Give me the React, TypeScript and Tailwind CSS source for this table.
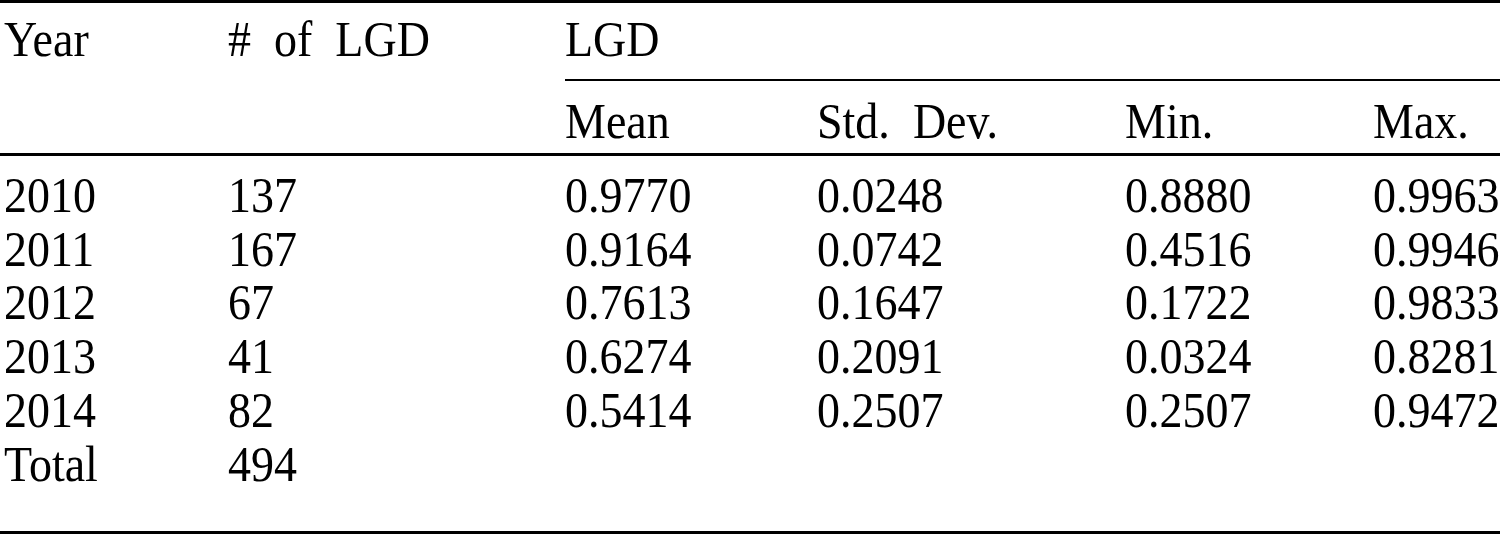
const rows = [
  { year: "2010", n: "137", mean: "0.9770", sd: "0.0248", min: "0.8880", max: "0.9963" },
  { year: "2011", n: "167", mean: "0.9164", sd: "0.0742", min: "0.4516", max: "0.9946" },
  { year: "2012", n: "67", mean: "0.7613", sd: "0.1647", min: "0.1722", max: "0.9833" },
  { year: "2013", n: "41", mean: "0.6274", sd: "0.2091", min: "0.0324", max: "0.8281" },
  { year: "2014", n: "82", mean: "0.5414", sd: "0.2507", min: "0.2507", max: "0.9472" },
]

const cols = "grid grid-cols-[224px_337px_252px_308px_248px_1fr] pl-[4px]"

function Txt({ children }: { children: React.ReactNode }) {
  return <div className="scale-y-110 whitespace-nowrap leading-[54px]">{children}</div>
}

export default function App() {
  return (
    <div
      className="w-[1500px] h-[536px] bg-white text-black text-[46px]"
      style={{ fontFamily: '"Liberation Serif", "Times New Roman", serif' }}
    >
      <div className="border-t-[3px] border-black">
        {/* header */}
        <div className={`${cols} border-b-[3px] border-black`}>
          <div className="row-span-2 pt-[9px]">
            <Txt>Year</Txt>
          </div>
          <div className="row-span-2 pt-[9px]">
            <Txt>#{"\u2002"}of{"\u2002"}LGD</Txt>
          </div>
          <div className="col-span-4 pt-[9px] pb-[13px] border-b-2 border-black">
            <Txt>LGD</Txt>
          </div>
          <div className="pt-[13px] pb-[5px]">
            <Txt>Mean</Txt>
          </div>
          <div className="pt-[13px] pb-[5px]">
            <Txt>Std.{"\u2002"}Dev.</Txt>
          </div>
          <div className="pt-[13px] pb-[5px]">
            <Txt>Min.</Txt>
          </div>
          <div className="pt-[13px] pb-[5px]">
            <Txt>Max.</Txt>
          </div>
        </div>

        {/* body */}
        <div className="pt-[12px] pb-[39px] border-b-[3px] border-black">
          {rows.map((r) => (
            <div key={r.year} className={cols}>
              <Txt>{r.year}</Txt>
              <Txt>{r.n}</Txt>
              <Txt>{r.mean}</Txt>
              <Txt>{r.sd}</Txt>
              <Txt>{r.min}</Txt>
              <Txt>{r.max}</Txt>
            </div>
          ))}
          <div className={cols}>
            <Txt>Total</Txt>
            <Txt>494</Txt>
          </div>
        </div>
      </div>
    </div>
  )
}
